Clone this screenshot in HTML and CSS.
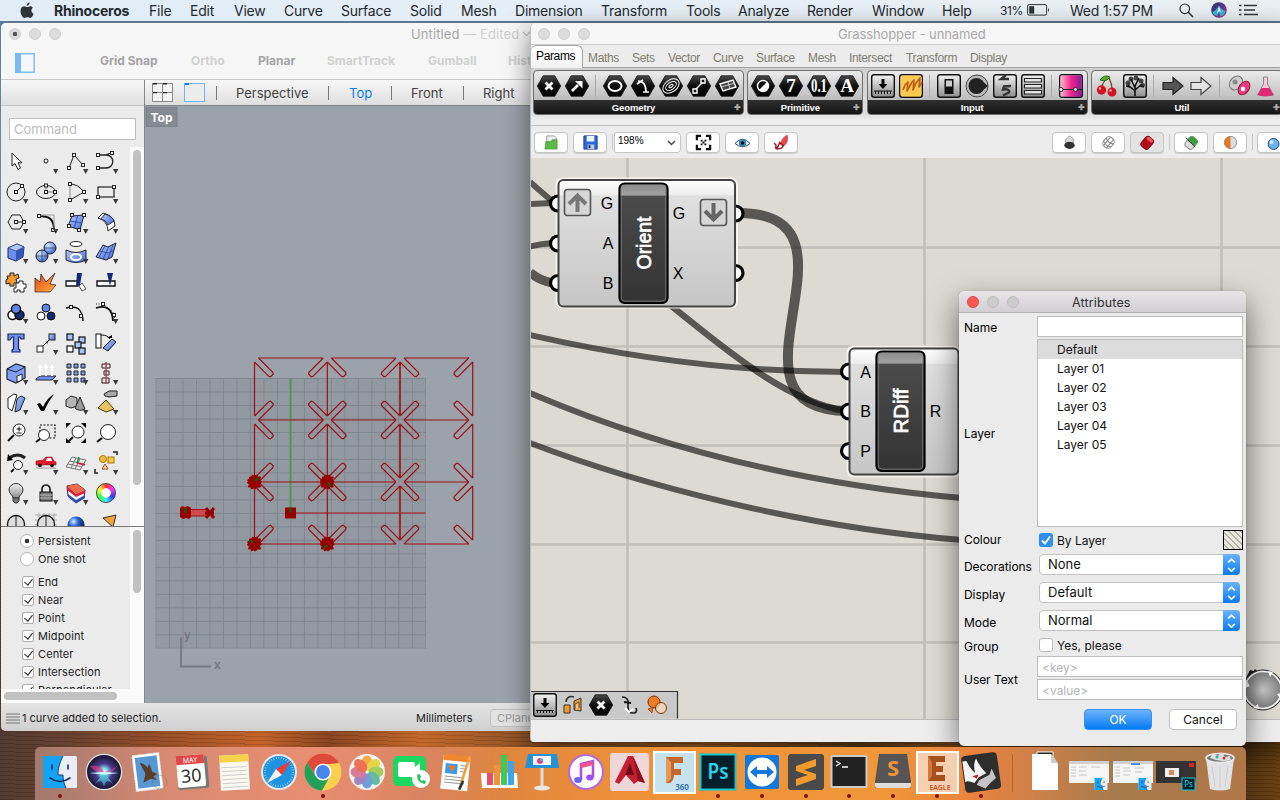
FILE: index.html
```html
<!DOCTYPE html>
<html lang="en">
<head>
<meta charset="utf-8">
<title>Rhinoceros</title>
<link rel="stylesheet" href="styles.css">
</head>
<body>
<svg class="defs" width="0" height="0">
  <defs>
    <path id="v" d="M7 7h5.4l-2.7 5z" fill="#3a3a3a"/>
    <rect id="k" x="-1.5" y="-1.5" width="3" height="3" fill="#fff" stroke="#222"/>
    <linearGradient id="blu" x1="0" y1="0" x2="1" y2="1"><stop offset="0" stop-color="#b9ccfb"/><stop offset="1" stop-color="#4468d8"/></linearGradient>
    <radialGradient id="ball" cx=".35" cy=".3" r=".8"><stop offset="0" stop-color="#dce8ff"/><stop offset=".5" stop-color="#7ba0ea"/><stop offset="1" stop-color="#2b50b8"/></radialGradient>
    <radialGradient id="dball" cx=".35" cy=".3" r=".7"><stop offset="0" stop-color="#d8ecff"/><stop offset=".4" stop-color="#2b66d8"/><stop offset="1" stop-color="#04123c"/></radialGradient>
    <linearGradient id="hexg" x1="0" y1="0" x2="0" y2="1"><stop offset="0" stop-color="#4a4a4a"/><stop offset=".45" stop-color="#111"/><stop offset="1" stop-color="#000"/></linearGradient>
    <linearGradient id="sil" x1="0" y1="0" x2="0" y2="1"><stop offset="0" stop-color="#f2f2f2"/><stop offset="1" stop-color="#8d8d8d"/></linearGradient>
    <linearGradient id="fire" x1="0" y1="0" x2="1" y2="1"><stop offset="0" stop-color="#e8431a"/><stop offset="1" stop-color="#ffb03a"/></linearGradient>
    <path id="hex" d="M-5.8-10.2H5.8L11.7 0L5.8 10.2H-5.8L-11.7 0z" fill="url(#hexg)" stroke="#111" stroke-width=".8"/>
    <rect id="box" x="-11.3" y="-11.3" width="22.6" height="22.6" rx="2.5" fill="url(#sil)" stroke="#111" stroke-width="1.4"/>
    <g id="finder"><rect x="-17" y="-16" width="34" height="32" rx="1.5" fill="#e9eef5"/><path d="M-17-16H3C-1-8-2-3-2 3H3C3 8 4 12 6 16H-17z" fill="#15a4f4"/><path d="M-8-7v4M8-7v4M-10 6Q0 13 10 6" stroke="#16305a" stroke-width="1.6" fill="none" stroke-linecap="round"/><path d="M3-16C-1-8-2-3-2 3H3C3 8 4 12 6 16" fill="none" stroke="#16305a" stroke-width=".9"/></g>
  </defs>
</svg>

<header class="menubar">
  <span><svg width="14" height="17" viewBox="0 0 14 17"><path d="M9.600.5c.1 1.700-1.400 3.300-3 3.300C6.400 2.200 7.900.7 9.600.5zM12.900 5.800c-2.300 1.600-1.800 4.900.700 5.900-.6 1.900-1.900 4.200-3.300 4.200-1.200 0-1.500-.7-2.900-.7s-1.900.7-2.900.7C2.500 15.900.5 12.100.5 9.100.5 6 2.300 4.300 4.300 4.300c1.200 0 2.200.8 2.900.8s1.800-.9 3.200-.9c1 0 1.900.6 2.500 1.600z" fill="#2e3439"/></svg></span>
  <b>Rhinoceros</b><span>File</span><span>Edit</span><span>View</span><span>Curve</span><span>Surface</span><span>Solid</span><span>Mesh</span><span>Dimension</span><span>Transform</span><span>Tools</span><span>Analyze</span><span>Render</span><span>Window</span><span>Help</span>
  <span class="pct">31%</span>
  <span><svg width="24" height="12" viewBox="0 0 24 12"><rect x=".6" y=".6" width="19" height="10.500" rx="1.500" fill="none" stroke="#2e3439"/><rect x="2.200" y="2.200" width="5" height="7.400" fill="#2e3439"/><path d="M21 4q2 2 0 4z" fill="#2e3439"/></svg></span>
  <span>Wed 1:57 PM</span>
  <span><svg width="15" height="15" viewBox="0 0 15 15"><circle cx="5.800" cy="5.800" r="4.800" fill="none" stroke="#2e3439" stroke-width="1.200"/><path d="M9.300 9.300L14 14" stroke="#2e3439" stroke-width="1.600"/></svg></span>
  <span><svg width="16" height="16" viewBox="0 0 16 16"><defs><linearGradient id="sg" x1="0" y1="0" x2="1" y2="1"><stop offset="0" stop-color="#28304e"/><stop offset=".4" stop-color="#4b3a8c"/><stop offset="1" stop-color="#c0307e"/></linearGradient></defs><circle cx="8" cy="8" r="7.800" fill="url(#sg)"/><path d="M1.500 10C4 9 6 7 8 4c2 3 4 4 6.500 5-1 4-3 5-5 5.500L8 10l-2 4C3.500 13.500 2 12 1.500 10z" fill="#37b6dc"/><path d="M8 4l2 6-2-1-2 3z" fill="#fff"/></svg></span>
  <span><svg width="19" height="12" viewBox="0 0 19 12"><path d="M5 1.500h13M5 6h11M5 10.500h14M0 1.500h2.500M0 6h2.500M0 10.500h2.500" stroke="#2e3439" stroke-width="1.700"/></svg></span>
</header>

<section class="win rhino">
  <div class="rtitle"><i class="dot on"></i><i class="dot"></i><i class="dot"></i><span class="doc">Untitled <em>— Edited</em></span><svg width="9" height="6" viewBox="0 0 9 6"><path d="M1 1l3.500 3.500L8 1" fill="none" stroke="#bbb" stroke-width="1.200"/></svg></div>
  <div class="rtools"><svg width="20" height="20" viewBox="0 0 20 20"><rect x=".8" y=".8" width="18.400" height="18.400" fill="#f4f8fc" stroke="#7ab8f8" stroke-width="1.400"/><rect width="6" height="20" fill="#7ab8f8"/></svg><b class="en">Grid Snap</b><b>Ortho</b><b class="en">Planar</b><b>SmartTrack</b><b>Gumball</b><b>Hist</b></div>
  <div class="rbody">
    <aside class="side">
      <div class="sidehead"></div>
      <div class="cmdwrap"><div class="cmd">Command</div></div>
      <div class="toolsarea">
        <div class="tools">
          <svg viewBox="-15 -15 30 30"><path d="M-4-9V4L-1 1.500L2 7.500L4.500 6L2 .8H6z" fill="#fff" stroke="#222"/></svg>
          <svg viewBox="-15 -15 30 30"><circle cy="-1" r="2" fill="#fff" stroke="#222"/><use href="#v"/></svg>
          <svg viewBox="-15 -15 30 30"><path d="M-7 6L-2-7L7 3" fill="none" stroke="#222"/><use href="#k" x="-7" y="6"/><use href="#k" x="-2" y="-7"/><use href="#k" x="7" y="3"/><use href="#v"/></svg>
          <svg viewBox="-15 -15 30 30"><path d="M-8-7H0C9-7 9 6 0 6H-8M-1-7L5-9" fill="none" stroke="#222" stroke-width="1.300"/><use href="#k" x="-8" y="-7"/><use href="#k" x="-8" y="6"/><use href="#k" x="6" y="-9"/><use href="#v"/></svg>

          <svg viewBox="-15 -15 30 30"><circle r="9" fill="none" stroke="#222"/><path d="M0 0L6-6" stroke="#222"/><use href="#k"/><use href="#k" x="6" y="-6"/><use href="#v"/></svg>
          <svg viewBox="-15 -15 30 30"><ellipse rx="9.500" ry="6.500" fill="none" stroke="#222"/><path d="M0-6V0H9" stroke="#777" fill="none"/><use href="#k"/><use href="#k" y="-6.500"/><use href="#k" x="9"/><use href="#v"/></svg>
          <svg viewBox="-15 -15 30 30"><path d="M-6-8Q2-8 8 0L-6 8" fill="none" stroke="#222"/><path d="M-6-8V8" stroke="#888"/><use href="#k" x="-6" y="-8"/><use href="#k" x="-6" y="8"/><use href="#k" x="8"/><use href="#v"/></svg>
          <svg viewBox="-15 -15 30 30"><rect x="-8" y="-5" width="16" height="10" fill="none" stroke="#222" stroke-width="1.200"/><use href="#k" x="-8" y="5"/><use href="#k" x="8" y="-5"/><use href="#v"/></svg>

          <svg viewBox="-15 -15 30 30"><path d="M-4-7H4L8 0L4 7H-4L-8 0z" fill="none" stroke="#222"/><path d="M0 0H8" stroke="#222"/><use href="#k"/><use href="#k" x="8"/><use href="#v"/></svg>
          <svg viewBox="-15 -15 30 30"><path d="M-8-6C4-6 8-3 8 9" fill="none" stroke="#111" stroke-width="2"/><path d="M-6-7H8V6" stroke="#999" fill="none"/><use href="#k" x="-7" y="-6"/><use href="#k" x="7" y="8"/><use href="#v"/></svg>
          <svg viewBox="-15 -15 30 30"><path d="M-4-6L8-7L4 8L-8 4z" fill="url(#blu)" stroke="#222"/><path d="M2-7L-2 6M-6-1L6 1" stroke="#2b50b8"/><use href="#k" x="-4" y="-7"/><use href="#k" x="8" y="-7"/><use href="#k" x="-7" y="4"/><use href="#k" x="3" y="8"/><use href="#v"/></svg>
          <svg viewBox="-15 -15 30 30"><path d="M-8-4L-3-9Q9-6 9 4L2 9Q2-1-8-4z" fill="#fff" stroke="#222"/><path d="M-5-3L-1-8Q7-5 8-1L2 3Q0-2-5-3z" fill="url(#blu)" stroke="#234"/><use href="#v"/></svg>

          <svg viewBox="-15 -15 30 30"><path d="M-8-4L1-8L8-5L7 5L0 9L-8 6z" fill="#6d90ee" stroke="#1a2a66"/><path d="M-8-4L0-1L8-5L1-8z" fill="#b5c8fb" stroke="#1a2a66" stroke-width=".6"/><path d="M0-1V9L7 5L8-5z" fill="#3456b8"/><use href="#v"/></svg>
          <svg viewBox="-15 -15 30 30"><circle cx="4" cy="-4" r="6" fill="url(#ball)" stroke="#223"/><circle cx="-4" cy="4" r="6" fill="url(#ball)" stroke="#223"/><path d="M-10 4H2M-4-2V10M-2-4H10" stroke="#234" stroke-width=".7"/><use href="#v"/></svg>
          <svg viewBox="-15 -15 30 30"><ellipse cy="-8" rx="6" ry="2.500" fill="#fff" stroke="#222"/><path d="M-10-2Q0 3 10-2V8Q0 13-10 8z" fill="url(#blu)" stroke="#223"/><ellipse cy="5" rx="5" ry="3" fill="none" stroke="#fff" stroke-width="2"/><use href="#v"/></svg>
          <svg viewBox="-15 -15 30 30"><path d="M-3-7L2-5L10-9L6 5L0 8L-10 5z" fill="url(#blu)" stroke="#223"/><path d="M-6-1L2 1L8-2M3-6L-3 7M-1-6L-7 5M7-7L2 7" stroke="#2b4aa0" fill="none" stroke-width=".8"/><use href="#v"/></svg>

          <svg viewBox="-15 -15 30 30"><path d="M-9-6h3v-3h4v3l4-2 1 4-3 1 1 4h-3v3h-4v-3l-4 1v-4l2-1z" fill="#f29a2e" stroke="#222"/><path d="M0 1h3v-2h4v3h3v4h-2v4h-4v-2h-3v2h-3v-4h2z" fill="#fff" stroke="#222"/></svg>
          <svg viewBox="-15 -15 30 30"><path d="M-11 10V-4L-6 0L-5-8L0 0L9-9L4 2L10 3L4 10z" fill="url(#fire)" stroke="#222" stroke-width=".7"/></svg>
          <svg viewBox="-15 -15 30 30"><path d="M-10-1H2V4H-10z" fill="#fff" stroke="#111" stroke-width="1.300"/><path d="M1-9H6L4 3L0 4z" fill="#102a78"/><path d="M3 4L6 1L10 7L6 9z" fill="#fff" stroke="#555"/></svg>
          <svg viewBox="-15 -15 30 30"><path d="M-9-1H9V4H-9z" fill="#fff" stroke="#111" stroke-width="1.400"/><path d="M1-9H7L4 4z" fill="#102a78"/></svg>

          <svg viewBox="-15 -15 30 30"><g stroke="#111" stroke-width="1.500"><circle cx="-3.500" cy="3" r="4.500" fill="#fff"/><circle cx="3.500" cy="3" r="4.500" fill="#102a78"/><circle cy="-3" r="4.500" fill="#5f86ee"/></g><use href="#v"/></svg>
          <svg viewBox="-15 -15 30 30"><g stroke="#111"><circle cx="-5" cy="4" r="4" fill="#fff"/><circle cx="5" cy="4" r="4" fill="#102a78"/><circle cy="-4" r="4" fill="#5f86ee"/></g></svg>
          <svg viewBox="-15 -15 30 30"><path d="M-10-4Q6-9 7 9" fill="none" stroke="#111" stroke-width="1.500"/><use href="#k" x="-5" y="-5"/><use href="#k" x="5" y="4"/></svg>
          <svg viewBox="-15 -15 30 30"><path d="M-10-4Q6-9 7 9" fill="none" stroke="#111" stroke-width="1.800"/><path d="M-10-8H-3L7 0L9 8" fill="none" stroke="#333" stroke-dasharray="1 1.500"/><use href="#k" x="-3" y="-8"/><use href="#k" x="8" y="3"/><use href="#v"/></svg>

          <svg viewBox="-15 -15 30 30"><path d="M-8-9H8V-4H5L4-6H2.500V6L4 7V9H-4V7L-2.500 6V-6H-4L-6-3H-8z" fill="#7292ee" stroke="#14265c" stroke-width="1.200"/></svg>
          <svg viewBox="-15 -15 30 30"><path d="M-5 5L4-4" stroke="#222"/><path d="M0-1L3-3L1 1z"/><rect x="-9" y="3" width="6" height="6" fill="#fff" stroke="#222"/><rect x="3" y="-9" width="6" height="6" fill="url(#blu)" stroke="#222"/><use href="#v"/></svg>
          <svg viewBox="-15 -15 30 30"><g fill="#a9c0fa" stroke="#111" stroke-width="1.200"><rect x="-9" y="-9" width="6" height="6"/><rect x="3" y="-6" width="6" height="6"/><rect x="-1" y="-1" width="6" height="6"/><rect x="3" y="5" width="6" height="6"/><rect x="-9" y="3" width="6" height="6" fill="#fff"/></g></svg>
          <svg viewBox="-15 -15 30 30"><rect x="-10" y="-9" width="5" height="14" fill="#fff" stroke="#111"/><path d="M-3 5L6-4L10-1L2 8z" fill="url(#blu)" stroke="#111"/><path d="M-5-8Q2-8 4-4" fill="none" stroke="#111"/><path d="M1-5h5v-3z"/></svg>

          <svg viewBox="-15 -15 30 30"><path d="M-9-4L0-9L9-6V5L0 10L-9 6z" fill="#7fa0f4" stroke="#223" stroke-width="1.200"/><path d="M-9-4L0-1L9-6" fill="none" stroke="#223"/><path d="M1 3L6 1V7L1 9z" fill="#fff" stroke="#223"/><use href="#v"/></svg>
          <svg viewBox="-15 -15 30 30"><path d="M-10 6L-6 3H10L6 7H-10z" fill="#6f92f0" stroke="#223"/><path d="M-6 3V-6M0 3V-6M6 3V-6" stroke="#fff" stroke-width="1.600"/><path d="M-8.500-5l2.500-4 2.500 4zM-2.500-5L0-9l2.500 4zM3.500-5L6-9l2.500 4z" fill="#fff"/><use href="#v"/></svg>
          <svg viewBox="-15 -15 30 30"><g fill="#7d9bef" stroke="#222"><path d="M-9-9h4v4h-4zM-2-9h4v4h-4zM5-9h4v4H5zM-9-2h4v4h-4zM-2-2h4v4h-4zM5-2h4v4H5zM-9 5h4v4h-4zM-2 5h4v4h-4zM5 5h4v4H5z"/></g><use href="#v"/></svg>
          <svg viewBox="-15 -15 30 30"><g fill="#e6e6e6" stroke="#222"><path d="M-4-9H4v4H-4zM-2-2H3v4H-2zM-4 5H3v5H-4z"/></g><path d="M0-11V11" stroke="#d8203a" stroke-width="1.300"/><use href="#v"/></svg>

          <svg viewBox="-15 -15 30 30"><path d="M-8-5L-2-9L1-8L-4 8L-8 5z" fill="#fff" stroke="#222"/><path d="M1-4L5-7L9-5L4 7L-1 9z" fill="url(#blu)" stroke="#222"/><use href="#v"/></svg>
          <svg viewBox="-15 -15 30 30"><path d="M-9 1L-6 0L-3 4Q1-5 8-9Q2-1-2 8L-5 8z"/><use href="#v"/></svg>
          <svg viewBox="-15 -15 30 30"><path d="M-10-3L-5-7L1-5V3L-5 5L-10 3z" fill="#b5b5b5" stroke="#222"/><path d="M4-6L9 6Q3 9-1 5z" fill="#999" stroke="#222"/><use href="#v"/></svg>
          <svg viewBox="-15 -15 30 30"><path d="M-8 5L0-3L8 6L0 9z" fill="#e8c25e" stroke="#4a3a10"/><path d="M-2-9L3-12L11-12V-7L3-6L-1-7z" fill="#aaa" stroke="#222"/><use href="#v"/></svg>

          <svg viewBox="-15 -15 30 30"><circle cx="3" cy="-3" r="6" fill="#fff" stroke="#222"/><path d="M-2 2L-8 8" stroke="#111" stroke-width="2"/><path d="M.500-4h5M3-6.500v5M.500 0h5" stroke="#111"/></svg>
          <svg viewBox="-15 -15 30 30"><rect x="-6" y="-8" width="15" height="13" fill="none" stroke="#111" stroke-dasharray="2 1.500" stroke-width="1.200"/><circle cx="-2" cy="2" r="5.500" fill="#fff" stroke="#222"/><path d="M-6 6L-10 9" stroke="#111" stroke-width="2"/></svg>
          <svg viewBox="-15 -15 30 30"><path d="M-10-10h5l-5 5zM10-10v5l-5-5zM10 10h-5l5-5zM-10 10v-5l5 5z"/><circle cx="2" cy="-1" r="6" fill="#fff" stroke="#222"/><path d="M-3 4L-8 9" stroke="#111" stroke-width="2"/></svg>
          <svg viewBox="-15 -15 30 30"><circle cx="2" cy="-1" r="7.500" fill="#fff" stroke="#222"/><path d="M-4 5L-9 9" stroke="#111" stroke-width="2.200"/></svg>

          <svg viewBox="-15 -15 30 30"><path d="M-7-5Q2-11 9-5" fill="none" stroke="#222" stroke-width="3"/><path d="M-9-2l1-7 5 6z"/><circle cx="2" cy="2" r="4.500" fill="#fff" stroke="#222"/><path d="M-2 6L-5 9" stroke="#111" stroke-width="2"/><use href="#v"/></svg>
          <svg viewBox="-15 -15 30 30"><path d="M-10-2L-3-3L0-6H6L8-2L10-1V2H-10z" fill="#e0182c" stroke="#8c0d18" stroke-width=".5"/><path d="M1-5h4l1 3H0z" fill="#fff"/><circle cx="-6" cy="2.500" r="1.800"/><circle cx="6" cy="2.500" r="1.800"/><path d="M-10 5H10" stroke="#999"/><use href="#v"/></svg>
          <svg viewBox="-15 -15 30 30"><path d="M-4-6L10-3L4 7L-10 4zM0-5L-5 5M4-4L-1 6M-6-2L9 1M-8 1L6 4" fill="none" stroke="#777"/><path d="M1 0L3-6" stroke="#0b9a3c" stroke-width="1.500"/><path d="M1 0L9 2" stroke="#d8203a" stroke-width="1.500"/><use href="#v"/></svg>
          <svg viewBox="-15 -15 30 30"><circle cx="-3" cy="-4" r="3.500" fill="#f6b83c" stroke="#a87410"/><rect x="2" y="-6" width="6" height="6" fill="#f6c83c" stroke="#a87410"/><path d="M-1 1L2 6H-4z" fill="#ffd9b0" stroke="#a05010"/><path d="M7-11h4v3M-11 6v4h3" fill="none" stroke="#222" stroke-width="1.500"/><use href="#v"/></svg>

          <svg viewBox="-15 -15 30 30"><path d="M-3 5C-3 2-7 1-7-3a7 6.500 0 0 1 14 0C7 1 3 2 3 5z" fill="url(#sil)" stroke="#333"/><path d="M-3 5h6v3l-2 2h-2l-2-2z" fill="#777" stroke="#333"/><use href="#v"/></svg>
          <svg viewBox="-15 -15 30 30"><path d="M-4 0V-4a4 4 0 0 1 8 0V0" fill="none" stroke="#222" stroke-width="1.700"/><rect x="-6" y="-1" width="12" height="9" fill="#777" stroke="#111"/><path d="M-6 2H6M-6 5H6" stroke="#bbb"/><use href="#v"/></svg>
          <svg viewBox="-15 -15 30 30"><path d="M-9-7L1-9L9-3L8 5L0 10L-8 3z" fill="#fff" stroke="#223"/><path d="M-9-7L1-9L9-3L0 1z" fill="#f06a4a"/><path d="M-9-7L0 1V4L-9-3zM0 1L9-3V0L0 4z" fill="#d8203a"/><path d="M-8 1L0 7L9 2V5L0 10L-8 4z" fill="#2b50b8"/><use href="#v"/></svg>
          <div class="wheel"></div>

          <svg viewBox="-15 -15 30 30"><circle cy="1" r="8.500" fill="#ddd" stroke="#111" stroke-width="1.300"/><path d="M0-7V10M-8 5H8" stroke="#222"/></svg>
          <svg viewBox="-15 -15 30 30"><path d="M-11-8H11M-11-3H11M-11 2H11M-7-10V9M-2-10V9M3-10V9M8-10V9" stroke="#aaa"/><circle cy="1" r="8.500" fill="#ddd" stroke="#111" stroke-width="1.300"/><path d="M0-7V10M-8 5H8" stroke="#222"/></svg>
          <svg viewBox="-15 -15 30 30"><circle cy="2" r="8.500" fill="url(#dball)"/></svg>
          <svg viewBox="-15 -15 30 30"><path d="M-3-5L10-8L7 4z" fill="#f2a23a" stroke="#333"/></svg>
        </div>
        <div class="vtrack"><i class="t1"></i></div>
      </div>
      <div class="snaps">
        <div class="snaplist">
          <p><i class="radio sel"></i>Persistent</p><p><i class="radio"></i>One shot</p>
          <p class="gap"><i class="cb"></i>End</p><p><i class="cb"></i>Near</p><p><i class="cb"></i>Point</p><p><i class="cb"></i>Midpoint</p><p><i class="cb"></i>Center</p><p><i class="cb"></i>Intersection</p><p><i class="cb"></i>Perpendicular</p>
        </div>
        <div class="vtrack"><i class="t2"></i></div>
      </div>
      <div class="htrack"><i></i></div>
    </aside>
    <main class="view">
      <div class="viewtabs">
        <svg width="21" height="19" viewBox="0 0 21 19"><rect x=".5" y=".5" width="20" height="18" fill="#f4f4f4" stroke="#888"/><path d="M10.500 0v19M0 9.500h21" stroke="#888"/><path d="M1 .700h4M11 .700h4M1 9.600h4M11 9.600h4" stroke="#222" stroke-width="1.400"/></svg>
        <svg width="21" height="19" viewBox="0 0 21 19"><rect x=".5" y=".5" width="20" height="18" fill="#ececec" stroke="#72b3f5"/><path d="M1 1h4" stroke="#0a7cf0" stroke-width="2"/></svg>
        <i></i><span>Perspective</span><i></i><span class="cur">Top</span><i></i><span>Front</span><i></i><span>Right</span>
      </div>
      <svg class="vp" width="386" height="597" viewBox="145 106 386 597">
        <defs>
          <pattern id="g" x="155.500" y="378" width="13.490" height="13.490" patternUnits="userSpaceOnUse"><path d="M0 .5H13.500M.5 0V13.500" stroke="#80868f" stroke-width="1"/></pattern>
          <path id="arm" d="M4 0L18.300 14.300L18.800 16L16 18.800L14.300 18.300L0 4"/>
          <g id="dn"><use href="#arm"/></g><g id="dl"><use href="#arm" transform="scale(-1 1)"/></g>
          <g id="ur"><use href="#arm" transform="scale(1 -1)"/></g><g id="ul"><use href="#arm" transform="scale(-1 -1)"/></g>
          <g id="x4"><use href="#dn"/><use href="#dl"/><use href="#ur"/><use href="#ul"/></g>
          <path id="blob" d="M-2-7L0-6L2-7L3-5L6-5L5-2L7 0L5 2L6 5L3 5L1 7L-1 6L-3 7L-3 5L-6 5L-5 2L-7 1L-6-1L-7-2L-5-3L-5-5L-3-5z" fill="#960000" stroke="#960000"/>
        </defs>
        <rect x="145" y="106" width="386" height="597" fill="#9ca2aa"/>
        <rect x="155.500" y="378" width="270" height="270" fill="#9299a1"/>
        <rect x="155.500" y="378" width="270.500" height="270.500" fill="url(#g)"/>
        <path d="M290.500 378V508" stroke="#4c9a52" stroke-width="2"/>
        <path d="M296 513H425.500" stroke="#a3383f" stroke-width="1.500"/>
        <g fill="none" stroke="#9c0f14" stroke-width="1.200">
          <path d="M258.500 358H323M331.500 358H396M404.500 358H469M258.500 420H323M331.500 420H396M404.500 420H469M258.500 482H323M331.500 482H396M404.500 482H469M258.500 544H323M331.500 544H396M404.500 544H469"/>
          <path d="M254.500 362V416M254.500 424V478M254.500 486V540M327.300 362V416M327.300 424V478M327.300 486V540M472.700 362V416M472.700 424V478M472.700 486V540"/>
          <path d="M400 362V416M400 424V478M400 486V540" stroke="#a3282e" stroke-width="2"/>
          <use href="#dn" x="254.500" y="358"/><use href="#dn" x="327.300" y="358"/><use href="#dl" x="327.300" y="358"/><use href="#dn" x="400" y="358"/><use href="#dl" x="400" y="358"/><use href="#dl" x="472.700" y="358"/>
          <use href="#dn" x="254.500" y="420"/><use href="#ur" x="254.500" y="420"/><use href="#x4" x="327.300" y="420"/><use href="#x4" x="400" y="420"/><use href="#dl" x="472.700" y="420"/><use href="#ul" x="472.700" y="420"/>
          <use href="#dn" x="254.500" y="482"/><use href="#ur" x="254.500" y="482"/><use href="#x4" x="327.300" y="482"/><use href="#x4" x="400" y="482"/><use href="#dl" x="472.700" y="482"/><use href="#ul" x="472.700" y="482"/>
          <use href="#ur" x="254.500" y="544"/><use href="#ur" x="327.300" y="544"/><use href="#ul" x="327.300" y="544"/><use href="#ur" x="400" y="544"/><use href="#ul" x="400" y="544"/><use href="#ul" x="472.700" y="544"/>
        </g>
        <use href="#blob" x="254.500" y="482"/><use href="#blob" x="327.300" y="482"/><use href="#blob" x="254.500" y="544"/><use href="#blob" x="327.300" y="544"/>
        <path d="M255 481l3-3M328 483l2.500 3M253 543l-3-3M327 545l-3 3" stroke="#0a640a" stroke-width="2"/>
        <rect x="285" y="507.500" width="11" height="11" fill="#960000"/><path d="M290.500 507.500v5" stroke="#0a640a" stroke-width="2"/>
        <rect x="190" y="509.500" width="18" height="6.500" fill="#cf4a50" stroke="#a01010"/>
        <path d="M180 508l2-2 3 1 3-1 3 2v9l-2 2-3-1-3 1-3-2z" fill="#960000"/><path d="M185.500 508v5" stroke="#0a640a" stroke-width="2"/>
        <path d="M206 508l8 10M214 508l-8 10M205 513h9" stroke="#960000" stroke-width="3"/>
        <path d="M181 637.500V666.500H211" fill="none" stroke="#74797f" stroke-width="1.800"/>
        <text x="184" y="639" class="ax">y</text><text x="214" y="669" class="ax">x</text>
        <rect x="146" y="107.500" width="31" height="19" fill="#868b92" stroke="#7b8087"/><text x="150.500" y="122" class="vplab">Top</text>
      </svg>
    </main>
  </div>
  <footer class="rstat"><svg width="14" height="11" viewBox="0 0 14 11"><path d="M0 1h14M0 4h14M0 7h14M0 10h14" stroke="#777"/></svg><span class="msg">1 curve added to selection.</span><span class="unit">Millimeters</span><span class="cpl">CPlane</span></footer>
</section>

<section class="win gh">
  <div class="gtitle"><i class="dot"></i><i class="dot"></i><i class="dot"></i><span>Grasshopper - unnamed</span></div>
  <nav class="gtabs"><b>Params</b><span>Maths</span><span>Sets</span><span>Vector</span><span>Curve</span><span>Surface</span><span>Mesh</span><span>Intersect</span><span>Transform</span><span>Display</span></nav>
  <div class="ribbon">
    <div class="panel p1"><svg width="211" height="30" viewBox="533 70 211 30">
      <use href="#hex" x="549" y="86"/><path d="M545.500 82.500l7 7M552.500 82.500l-7 7" stroke="#fff" stroke-width="2.800"/>
      <use href="#hex" x="577" y="86"/><path d="M572 91l6-6" stroke="#fff" stroke-width="2.600"/><path d="M575 81h7.500v7.500z" fill="#fff"/>
      <path d="M595.500 75V97" stroke="#aaa"/>
      <use href="#hex" x="615" y="86"/><ellipse cx="615" cy="86" rx="6.500" ry="5" fill="none" stroke="#fff" stroke-width="2"/>
      <use href="#hex" x="643" y="86"/><path d="M638 81q8 0 8 11M637 84l6-4M643 92h6" stroke="#fff" stroke-width="1.700" fill="none"/>
      <use href="#hex" x="671" y="86"/><g transform="rotate(-35 671 86)" fill="none" stroke="#fff"><ellipse cx="671" cy="86" rx="9" ry="6"/><ellipse cx="671" cy="86" rx="6" ry="3.500"/><ellipse cx="671" cy="86" rx="2.500" ry="1.200"/></g>
      <use href="#hex" x="699" y="86"/><path d="M695 90l8-8" stroke="#fff" stroke-width="1.500"/><path d="M693 89h4v4h-4zM701 79h4v4h-4z" fill="#111" stroke="#fff" stroke-width="1.400"/>
      <use href="#hex" x="727" y="86"/><path d="M720 84l13-4 3 7-13 4z" fill="#444" stroke="#fff" stroke-width="1.400"/><path d="M728 82l2 7M721 87l14-4" stroke="#ccc"/>
    </svg><h5>Geometry<em>✚</em></h5></div>
    <div class="panel p2"><svg width="116" height="30" viewBox="747 70 116 30">
      <use href="#hex" x="763" y="86"/><circle cx="763" cy="86" r="5.500" fill="#111" stroke="#fff" stroke-width="1.400"/><path d="M767 82a5.500 5.500 0 0 1-8 8z" fill="#fff"/>
      <use href="#hex" x="791" y="86"/><text x="791" y="92" class="ht" font-size="19">7</text>
      <use href="#hex" x="819" y="86"/><text x="819" y="92" class="ht" font-size="18" textLength="16" lengthAdjust="spacingAndGlyphs">0.1</text>
      <use href="#hex" x="847" y="86"/><text x="847" y="92" class="ht" font-size="19">A</text>
    </svg><h5>Primitive<em>✚</em></h5></div>
    <div class="panel p3"><svg width="221" height="30" viewBox="867 70 221 30">
      <use href="#box" x="883" y="86"/><path d="M881.500 79h3v5h3l-4.500 5-4.500-5h3z"/><path d="M874 91H892M875.500 91v3M878.500 91v3M881.500 91v3M884.500 91v3M887.500 91v3M890.500 91v3" stroke="#111"/>
      <use href="#box" x="911" y="86"/><rect x="900.500" y="75.500" width="21" height="21" rx="2" fill="#ffc94e"/><path d="M903 90l2-5 3-3-1 9 5-9 2-2-1 10 3-7 4-5-1 9 3-5" fill="none" stroke="#b8621a" stroke-width="1.700" stroke-linejoin="round"/>
      <path d="M929.500 75V97M1051.500 75V97" stroke="#aaa"/>
      <use href="#box" x="949" y="86"/><rect x="944.500" y="79" width="9" height="15" fill="#111"/><rect x="946" y="80.500" width="6" height="6" fill="#ccc"/>
      <circle cx="977" cy="86" r="11" fill="#bbb" stroke="#444"/><circle cx="976.500" cy="86" r="8" fill="#222"/><path d="M981 80l7 6-7 6z" fill="#222"/>
      <use href="#box" x="1005" y="86"/><path d="M1006 75l-5 4h8M1011 86l-7 .500-1 3q7-1 6 3l-6 3" fill="none" stroke="#333" stroke-width="2.400"/>
      <use href="#box" x="1033" y="86"/><path d="M1024.500 78.500h17v3.500h-17zM1024.500 84.500h17v3.500h-17zM1024.500 90.500h17v3.500h-17z" fill="#e4e4e4" stroke="#222" stroke-width="1.200"/>
      <defs><linearGradient id="pk"><stop offset="0" stop-color="#f7b8cf"/><stop offset=".5" stop-color="#f2258a"/><stop offset="1" stop-color="#8a1a9a"/></linearGradient></defs>
      <use href="#box" x="1071" y="86"/><rect x="1060.500" y="75.500" width="21" height="21" fill="url(#pk)"/><path d="M1060 89.500h22" stroke="#222"/><circle cx="1061" cy="89.500" r="2" fill="#fff" stroke="#222"/><circle cx="1075.500" cy="89.500" r="2" fill="#fff" stroke="#222"/>
    </svg><h5>Input<em>✚</em></h5></div>
    <div class="panel p4"><svg width="192" height="30" viewBox="1091 70 192 30">
      <path d="M1101 89Q1103 80 1109 78Q1112 84 1112 89" fill="none" stroke="#6a4a20" stroke-width="1.300"/><path d="M1100 80q4-6 10-3-3 5-10 3z" fill="#58a828" stroke="#2f6a12"/><circle cx="1101.500" cy="90" r="4.700" fill="#d01424"/><circle cx="1112" cy="92" r="4.500" fill="#d01424"/><circle cx="1100" cy="88.500" r="1.200" fill="#ffb0b0"/><circle cx="1110.500" cy="90.500" r="1.200" fill="#ffb0b0"/>
      <use href="#box" x="1135" y="86"/><path d="M1135 96V85M1135 91l-7-6M1135 90l7-6M1135 88l-4-9M1135 86l4-8M1130 87l-4-1M1140 86l4 1" stroke="#111" stroke-width="1.600"/><g fill="#111" opacity=".75"><circle cx="1128" cy="83" r="2.500"/><circle cx="1131" cy="79" r="2.500"/><circle cx="1136" cy="78" r="2.500"/><circle cx="1141" cy="81" r="2.500"/><circle cx="1143" cy="85" r="2"/></g>
      <path d="M1153.500 75V97M1219.500 75V97" stroke="#aaa"/>
      <path d="M1163 82.500h10v-5l10 8.500-10 8.500v-5h-10z" fill="#555" stroke="#222" stroke-width="1.200"/>
      <path d="M1191 82.500h10v-5l10 8.500-10 8.500v-5h-10z" fill="#e4e4e4" stroke="#444" stroke-width="1.200"/>
      <ellipse cx="1236" cy="83" rx="6" ry="7.500" transform="rotate(40 1236 83)" fill="#ccc" stroke="#777"/><circle cx="1235" cy="82" r="2.500" fill="#888"/><ellipse cx="1244" cy="88" rx="5" ry="7.500" transform="rotate(35 1244 88)" fill="#e93a86" stroke="#912"/><circle cx="1243" cy="89" r="2.200" fill="#fff"/>
      <path d="M1263.500 77h4v7l6 11q-8 2-16 0l6-11z" fill="#f3c8d8" stroke="#888"/><path d="M1261.500 88h8l4 7q-8 2.500-16 0z" fill="#e02a72"/>
    </svg><h5>Util<em>✚</em></h5></div>
  </div>
  <div class="gbar">
    <span class="btn"><svg viewBox="-9 -9 18 18"><path d="M-5-7H3L5-5V5H-5z" fill="#eee" stroke="#999"/><path d="M-7 7L-6-1H-1L1-3H6V7z" fill="#5cb84a" stroke="#3a8a2c" stroke-width=".6"/></svg></span>
    <span class="btn"><svg viewBox="-9 -9 18 18"><path d="M-7-7H7V7H-7z" fill="#2a6ad8" stroke="#1a3a90"/><path d="M-4-7H4V-1H-4z" fill="#eef4ff"/><path d="M-3 2H4V7H-3z" fill="#bcd"/><path d="M-2 3H0V6H-2z" fill="#124"/></svg></span>
    <i class="sep"></i>
    <span class="combo">198%<svg width="9" height="6" viewBox="0 0 9 6"><path d="M1 1l3.500 3.500L8 1" fill="none" stroke="#444" stroke-width="1.400"/></svg></span>
    <span class="btn"><svg viewBox="-9 -9 18 18"><path d="M-7-2.500V-7H-2.500M2.500-7H7V-2.500M7 2.500V7H2.500M-2.500 7H-7V2.500" fill="none" stroke="#111" stroke-width="2.400"/><path d="M-3-3h2v2h2v-2h2v2h-2v2h2v2h-2v-2h-2v2h-2v-2h2v-2h-2z" fill="#111"/></svg></span>
    <span class="btn"><svg viewBox="-9 -9 18 18"><path d="M-8 1Q0-8 8 1Q0 8-8 1z" fill="#e8f4fa" stroke="#333"/><circle cy=".5" r="4" fill="#2b8cc4"/><circle cy=".5" r="1.800"/></svg></span>
    <span class="btn"><svg viewBox="-9 -9 18 18"><path d="M-1 2Q0-5 6-8Q8 0 2 4z" fill="#e84a4a" stroke="#a22" stroke-width=".5"/><path d="M-8 1Q-5 2-6 5T0 6L2 3L-2 0Q-3 4-5 6" fill="none" stroke="#a01820" stroke-width="1.500"/></svg></span>
    <b class="grow"></b>
    <span class="btn"><svg viewBox="-9 -9 18 18"><path d="M-4-3L0-7L4-4V1H-4z" fill="#ddd" stroke="#999"/><ellipse cy="3" rx="5.500" ry="3.800" fill="#333"/></svg></span>
    <span class="btn"><svg viewBox="-9 -9 18 18"><g fill="none" stroke="#888" stroke-width="1.100" transform="rotate(40)"><rect x="-5" y="-6" width="10" height="12" rx="4"/><path d="M-5-2q5 3 10 0M-5 2q5 3 10 0M-2-6V6M2-6V6"/></g></svg></span>
    <span class="btn down"><svg viewBox="-9 -9 18 18"><g transform="rotate(40)"><rect x="-5" y="-6" width="10" height="13" rx="3.500" fill="#b80d1c" stroke="#700"/><ellipse cy="-4" rx="4" ry="2" fill="#e85a60"/></g></svg></span>
    <i class="sep"></i>
    <span class="btn"><svg viewBox="-9 -9 18 18"><g transform="rotate(40)"><rect x="-5" y="-6" width="10" height="13" rx="3.500" fill="#ddd" stroke="#888"/><path d="M-5-2Q-5-6 0-6T5-2V1H-5z" fill="#3aa03a"/></g><path d="M-6-5L4 5" stroke="#333"/></svg></span>
    <span class="btn"><svg viewBox="-9 -9 18 18"><circle r="6.500" fill="#ddd" stroke="#888"/><path d="M0-6.500A6.500 6.500 0 0 0 0 6.500z" fill="#e07a28"/></svg></span>
    <i class="sep"></i>
    <span class="btn"><svg viewBox="-9 -9 18 18"><circle cx="-1" cy="1.500" r="5.800" fill="#6ab4ee" stroke="#246"/><circle cx="-3" cy="-.5" r="2" fill="#d8f0ff"/></svg></span>
  </div>
  <svg class="canvas" width="750" height="561" viewBox="530 158 750 561">
    <defs>
      <linearGradient id="cmp" x1="0" y1="0" x2="0" y2="1"><stop offset="0" stop-color="#fff"/><stop offset=".12" stop-color="#ededed"/><stop offset=".125" stop-color="#dfdfdf"/><stop offset="1" stop-color="#c6c6c6"/></linearGradient>
      <linearGradient id="drk" x1="0" y1="0" x2="0" y2="1"><stop offset="0" stop-color="#8c8c8c"/><stop offset=".1" stop-color="#a2a2a2"/><stop offset=".101" stop-color="#4b4b4b"/><stop offset="1" stop-color="#333"/></linearGradient>
      <radialGradient id="cps"><stop offset="0" stop-color="#ccc"/><stop offset="1" stop-color="#777"/></radialGradient>
    </defs>
    <rect x="530" y="158" width="750" height="561" fill="#dcdad3"/>
    <path d="M627.500 158V719M924.500 158V719M1221.500 158V719M530 247.500H1280M530 346.500H1280M530 445.500H1280M530 544.500H1280M530 642.500H1280" stroke="#c1bfba" stroke-width="2.600"/>
    <g fill="none" stroke="#000" stroke-opacity=".6">
      <path d="M530 182L553 202" stroke-width="6"/><path d="M530 204L553 203" stroke-width="6"/><path d="M530 246.500Q540 244 553 243" stroke-width="6"/><path d="M530 272.500Q540 281 553 283" stroke-width="9"/>
      <path d="M738 213C880 213 706 411 848 411" stroke-width="10"/><path d="M660 297C715 340 780 400 846 411" stroke-width="6.500"/>
      <path d="M530 335C640 360 740 372 845 372" stroke-width="6"/><path d="M530 393C640 440 780 482 962 498" stroke-width="6"/><path d="M530 443C640 485 800 527 962 540" stroke-width="6"/>
    </g>
    <g fill="none" stroke="#f4f3f0" stroke-width="2"><rect x="556.500" y="178.500" width="180.500" height="129" rx="6"/><rect x="847.500" y="346.500" width="113" height="130" rx="6"/></g>
    <g fill="#fff" stroke="#000" stroke-width="3.200"><circle cx="558" cy="203.500" r="7.500"/><circle cx="558" cy="243.500" r="7.500"/><circle cx="558" cy="283" r="7.500"/><circle cx="735.500" cy="213.500" r="7.500"/><circle cx="735.500" cy="273" r="7.500"/><circle cx="849" cy="371.500" r="7.500"/><circle cx="849" cy="411.500" r="7.500"/><circle cx="849" cy="451" r="7.500"/></g>
    <g fill="url(#cmp)" stroke="#444" stroke-width="2"><rect x="558.500" y="180" width="176.500" height="126.500" rx="5"/><rect x="849.500" y="348.500" width="109" height="126" rx="5"/></g>
    <g fill="url(#drk)" stroke="#000" stroke-width="2.200"><rect x="619.500" y="183.500" width="48" height="119.500" rx="5"/><rect x="876.500" y="351.500" width="48" height="119.500" rx="5"/></g>
    <g fill="none" stroke="#888" stroke-width=".8"><rect x="621.200" y="185.200" width="44.600" height="116" rx="4"/><rect x="878.200" y="353.200" width="44.600" height="116" rx="4"/></g>
    <g fill="#d6d6d6" stroke="#555" stroke-width="1.600"><rect x="564.500" y="189.500" width="26" height="26" rx="3"/><rect x="700.500" y="199.500" width="26" height="26" rx="3"/></g>
    <path d="M577.500 212V196M569 204l8.500-8.500L586 204" fill="none" stroke="#777" stroke-width="4"/><path d="M713.500 203V219M705 211l8.500 8.500L722 211" fill="none" stroke="#666" stroke-width="4"/>
    <g class="port"><text x="607" y="209">G</text><text x="608" y="249">A</text><text x="608" y="289">B</text><text x="679" y="219">G</text><text x="678" y="279">X</text><text x="865.500" y="378">A</text><text x="865.500" y="417">B</text><text x="865.500" y="457">P</text><text x="935.500" y="417">R</text></g>
    <text class="cname" transform="translate(650.500 243) rotate(-90)" textLength="53" lengthAdjust="spacingAndGlyphs">Orient</text>
    <text class="cname" transform="translate(907.500 411) rotate(-90)" textLength="45" lengthAdjust="spacingAndGlyphs">RDiff</text>
    <path d="M1246 678l4-8 6 2 3 4zM1250 676l5-7 6 5z" fill="#111"/>
    <circle cx="1263" cy="690" r="20" fill="url(#cps)" stroke="#333"/><circle cx="1263" cy="690" r="18.500" fill="none" stroke="#fff" stroke-width="1.500"/>
    <path d="M1268 671l5 1-3 5zM1281 700l-4-6 4-1zM1253 708l5-4 1 5zM1246 680l4 6-5 2z" fill="#fff"/>
    <rect x="531" y="691" width="147" height="27.500" fill="#c9c9c9"/><path d="M531 691.500H677.500V718.500" fill="none" stroke="#333" stroke-width="1.200"/>
    <use href="#box" x="545" y="705"/><path d="M543.500 698h3v5h3l-4.500 5-4.500-5h3z"/><path d="M536 710.500H554M537.500 710v3M540.500 710v3M543.500 710v3M546.500 710v3M549.500 710v3M552.500 710v3" stroke="#111"/>
    <path d="M564 705h6v8h-6zM574 701l7-3v13l-7-1z" fill="#f49a28" stroke="#333"/><path d="M566 702q1-7 8-5" fill="none" stroke="#333" stroke-width="1.600"/><path d="M575 711V704l4-2v6" fill="#f8c070" stroke="#333" stroke-width=".8"/>
    <use href="#hex" x="601" y="705"/><path d="M597.500 701.500l7 7M604.500 701.500l-7 7" stroke="#fff" stroke-width="2.800"/>
    <path d="M622 697q5 0 6 4v6q0 6 5 6t3-5" fill="none" stroke="#222" stroke-width="1.700"/><path d="M625 708l4 4 4-3" fill="none" stroke="#fff" stroke-width="2"/><path d="M624 702l7 1" stroke="#111" stroke-width="1.800"/>
    <circle cx="654" cy="702" r="6" fill="#f07c28" stroke="#7a3608"/><circle cx="661" cy="708" r="5.500" fill="#f8d8b8" fill-opacity=".7" stroke="#7a3608"/><path d="M648 709l5-2-1 6z" fill="#f07c28" stroke="#7a3608" stroke-width=".7"/>
  </svg>
  <div class="gstat"></div>
</section>

<section class="win attr">
  <div class="atitle"><i class="dot red"></i><i class="dot"></i><i class="dot"></i><span>Attributes</span></div>
  <div class="form">
    <label class="r1">Name</label><div class="inp r1"></div>
    <label class="r2">Layer</label><ul class="r2"><li class="hl">Default</li><li>Layer 01</li><li>Layer 02</li><li>Layer 03</li><li>Layer 04</li><li>Layer 05</li></ul>
    <label class="r3">Colour</label><div class="chk"><i class="on"><svg viewBox="0 0 14 14"><path d="M3 7.500L6 10.500L11 3.500" fill="none" stroke="#fff" stroke-width="1.900"/></svg></i>By Layer<b class="sw"></b></div>
    <label class="r4">Decorations</label><div class="pick">None<i><svg viewBox="0 0 16 21"><path d="M4.800 8L8 4.800L11.200 8M4.800 13L8 16.200L11.200 13" fill="none" stroke="#fff" stroke-width="1.500"/></svg></i></div>
    <label class="r4">Display</label><div class="pick">Default<i><svg viewBox="0 0 16 21"><path d="M4.800 8L8 4.800L11.200 8M4.800 13L8 16.200L11.200 13" fill="none" stroke="#fff" stroke-width="1.500"/></svg></i></div>
    <label class="r4">Mode</label><div class="pick">Normal<i><svg viewBox="0 0 16 21"><path d="M4.800 8L8 4.800L11.200 8M4.800 13L8 16.200L11.200 13" fill="none" stroke="#fff" stroke-width="1.500"/></svg></i></div>
    <label class="r5">Group</label><div class="chk c2"><i></i>Yes, please</div>
    <label class="r6">User Text</label><div class="kv"><div class="inp">&lt;key&gt;</div><div class="inp">&lt;value&gt;</div></div>
  </div>
  <div class="acts"><span class="ok">OK</span><span>Cancel</span></div>
</section>

<footer class="dock">
  <span class="run"><svg viewBox="-22 -22 44 44"><use href="#finder"/></svg></span>
  <span><svg viewBox="-22 -22 44 44"><defs><radialGradient id="si"><stop offset="0" stop-color="#fff"/><stop offset=".2" stop-color="#7fe4ea"/><stop offset=".5" stop-color="#4a3a8a"/><stop offset="1" stop-color="#15152c"/></radialGradient></defs><circle r="18.300" fill="#ddd"/><circle r="17" fill="url(#si)"/><path d="M-14-6Q-3-8 0 0Q9-2 14-7Q8 2 0 1Q-8 1-14-6z" fill="#e23b8c" opacity=".65"/><path d="M-9 12L0 0L9 12Q2 5 0 15Q-2 5-9 12z" fill="#48c8dc" opacity=".7"/><path d="M-15 1L0 0L15 1L0 2.500z" fill="#cfffff"/></svg></span>
  <span><svg viewBox="-22 -22 44 44"><g transform="rotate(-7)"><rect x="-14" y="-18" width="27" height="36" fill="#fff" stroke="#ddd" stroke-dasharray="2 1"/><rect x="-11.500" y="-15.500" width="22" height="31" fill="#5797d4"/><path d="M-7-10Q-2-9 0-4L2-8Q4-3 4 0L9 3L5 5L8 9L2 7L-6 10L-4 5Q-2 2-4-2z" fill="#5a3d22"/></g><circle cx="12" cy="10" r="7" fill="none" stroke="#776" opacity=".5"/></svg></span>
  <span><svg viewBox="-22 -22 44 44"><g transform="rotate(-5)"><rect x="-15" y="-15" width="31" height="32" rx="2" fill="#777"/><rect x="-15" y="-17" width="28" height="32" rx="2" fill="#fff"/><path d="M-15-17h28v9h-28z" fill="#e04848"/><text x="-1" y="-9.500" class="dt" font-size="7" fill="#fff">MAY</text><text x="-1" y="10" class="dt" font-size="18" fill="#333">30</text></g></svg></span>
  <span><svg viewBox="-22 -22 44 44"><g transform="rotate(-3)"><rect x="-15" y="-17" width="29" height="35" fill="#fbfaf2"/><path d="M-15-17h29v7h-29z" fill="#f5d24a"/><path d="M-13-5h25M-13-1h25M-13 3h25M-13 7h25M-13 11h25M-13 15h25" stroke="#ccc"/></g></svg></span>
  <span><svg viewBox="-22 -22 44 44"><circle r="18" fill="#e5e8ec"/><circle r="16" fill="#1f92e2"/><circle r="14" fill="none" stroke="#9dd" stroke-width="2" stroke-dasharray=".7 1.800"/><path d="M12-11L3 3L-3-3z" fill="#ef3b36"/><path d="M-12 11L3 3L-3-3z" fill="#f4f4f4"/></svg></span>
  <span class="run"><svg viewBox="-22 -22 44 44"><circle r="18.500" fill="#fcd04f"/><path d="M-16-9.300A18.500 18.500 0 0 1 16-9.300L7-8H0L-7 4z" fill="#df4a3c"/><path d="M-16-9.300A18.500 18.500 0 0 0-1 18.500L7 4H-7z" fill="#23a058"/><circle r="8.600" fill="#fff"/><circle r="6.900" fill="#4384ee"/></svg></span>
  <span><svg viewBox="-22 -22 44 44"><circle r="18" fill="#f5f5f3"/><g opacity=".88"><ellipse cy="-9" rx="5.500" ry="7.500" fill="#f6a02c"/><ellipse cy="-9" rx="5.500" ry="7.500" fill="#e3d030" transform="rotate(45)"/><ellipse cy="-9" rx="5.500" ry="7.500" fill="#9ac848" transform="rotate(90)"/><ellipse cy="-9" rx="5.500" ry="7.500" fill="#53b594" transform="rotate(135)"/><ellipse cy="-9" rx="5.500" ry="7.500" fill="#5d94d4" transform="rotate(180)"/><ellipse cy="-9" rx="5.500" ry="7.500" fill="#9a76b8" transform="rotate(225)"/><ellipse cy="-9" rx="5.500" ry="7.500" fill="#d66b90" transform="rotate(270)"/><ellipse cy="-9" rx="5.500" ry="7.500" fill="#ec6040" transform="rotate(315)"/></g></svg></span>
  <span><svg viewBox="-22 -22 44 44"><rect x="-18" y="-16" width="33" height="30" rx="5" fill="#1ed760"/><path d="M-13-8q0-2 2-2H2q2 0 2 2v3l5-4V6L4 2v1q0 2-2 2h-13q-2 0-2-2z" fill="#fff"/><circle cx="10" cy="7" r="9" fill="#fff"/><path d="M6 3q0 8 8 9l1-3-3-1-1 1q-2-1-2-3l1-1-1-3z" fill="#25c45a"/></svg></span>
  <span><svg viewBox="-22 -22 44 44"><g transform="rotate(6)"><rect x="-13" y="-16" width="27" height="34" fill="#fff"/><path d="M-13-17h27v6h-27z" fill="#ef8730"/><rect x="-10" y="-8" width="12" height="10" fill="#3a9be8"/><path d="M-8-6h8l-3 6z" fill="#f07a28"/><path d="M-10 5h20M-10 8h20M-10 11h20M5-7h6M5-4h6M5-1h6" stroke="#999"/><path d="M13-17L6 17" stroke="#f0a238" stroke-width="2.500"/><path d="M9 8L6 17" stroke="#234" stroke-width="2.500"/></g></svg></span>
  <span><svg viewBox="-22 -22 44 44"><path d="M-18 1h36l1 15h-36z" fill="#fff"/><path d="M-12 1h6v12h-6z" fill="#e8506a"/><path d="M-5-7H1v20h-6z" fill="#f2923a"/><path d="M2-17H8v30H2z" fill="#3cc95e"/><path d="M9-11h6v24H9z" fill="#40a4e8"/></svg></span>
  <span><svg viewBox="-22 -22 44 44"><path d="M-14-18H15l2 14H-17z" fill="#2791d8"/><path d="M-9-16h18v9h-18z" fill="#f5f8fa"/><circle cx="-2" cy="-11" r="3" fill="#e83e7c"/><path d="M-2-11v-3a3 3 0 0 1 3 3z" fill="#38b6e8"/><path d="M0-4V15" stroke="#ddd" stroke-width="3"/><ellipse cy="16" rx="8" ry="2.500" fill="#e8e8e8"/></svg></span>
  <span><svg viewBox="-22 -22 44 44"><circle r="18" fill="#b36ae0"/><circle r="16" fill="#fafafa"/><path d="M-5 8V-8L7-11V5" fill="none" stroke="#b04fe0" stroke-width="2.500"/><path d="M-5-6L7-9" stroke="#f0508c" stroke-width="4"/><ellipse cx="-8" cy="8" rx="3.800" ry="3" fill="#6a62ee"/><ellipse cx="4" cy="5.500" rx="3.800" ry="3" fill="#9a52ee"/></svg></span>
  <span><svg viewBox="-22 -22 44 44"><rect x="-20" y="-19" width="39" height="38" rx="3" fill="#efd6d8"/><path d="M-2-16L3-16L15 11L8 9L4 12L-4 3L-11 12L-15 10z" fill="#c41f30"/><path d="M0-9L4 3H-5z" fill="#6b0d18"/><path d="M3-16L15 11L8 9z" fill="#8c1220"/></svg></span>
  <span><svg viewBox="-22 -22 44 44"><rect x="-20" y="-20" width="41" height="41" fill="#c7e2ef" stroke="#fff" stroke-width="2"/><path d="M-8-15H9V-9H0V-3H7V3H0Q0 8-4 11H-8z" fill="#c4672c"/><path d="M-8-15l5 5v17l-5 4z" fill="#e59a58"/><text x="8" y="18" class="dt" font-size="8" font-weight="600" fill="#2c6aa8">360</text></svg></span>
  <span class="run"><svg viewBox="-22 -22 44 44"><rect x="-17.500" y="-17.500" width="35" height="35" fill="#04202a" stroke="#17c6d6" stroke-width="2"/><text y="7" class="dt" font-size="21" font-weight="600" textLength="21" lengthAdjust="spacingAndGlyphs" fill="#2cd0ea">Ps</text></svg></span>
  <span class="run"><svg viewBox="-22 -22 44 44"><rect x="-17" y="-17" width="34" height="34" rx="2" fill="#1278dc"/><circle r="14.500" fill="#fff"/><path d="M-12 0L-5-6V-2H5V-6L12 0L5 6V2H-5V6z" fill="#1278dc"/></svg></span>
  <span class="run"><svg viewBox="-22 -22 44 44"><rect x="-18" y="-18" width="36" height="36" rx="3" fill="#4a4a4a"/><path d="M-10-6L10-13V-6L-2-2L10 2V7L-10 14V7L2 3L-10-1z" fill="#f49a2c"/></svg></span>
  <span class="run"><svg viewBox="-22 -22 44 44"><rect x="-18.500" y="-17" width="37" height="33" rx="2" fill="#ccc"/><rect x="-16.500" y="-15" width="33" height="29" fill="#222"/><path d="M-13-11l4 2.500-4 2.500M-7-5h6" stroke="#fff" fill="none" stroke-width="1.300"/></svg></span>
  <span class="run"><svg viewBox="-22 -22 44 44"><path d="M-14-18H14L18 10V16H-18V10z" fill="#555"/><path d="M-18 11H18V14Q18 16 16 16H-16Q-18 16-18 14z" fill="#ddd"/><text y="4" class="dt" font-size="22" font-weight="700" fill="#f2913a">S</text></svg></span>
  <span class="run"><svg viewBox="-22 -22 44 44"><rect x="-20" y="-20" width="41" height="41" fill="#f5cfb2" stroke="#fff" stroke-width="2"/><path d="M-9-16H8V-10H-1V-6H6V0H-1V3H8V9H-9z" fill="#a8501c"/><path d="M-9-16l4 6v14l-4 5z" fill="#d27a3c"/><text x="3" y="18" class="dt" font-size="7.500" font-weight="600" textLength="21" lengthAdjust="spacingAndGlyphs" fill="#c8501c">EAGLE</text></svg></span>
  <span class="run"><svg viewBox="-22 -22 44 44"><g transform="rotate(-8)"><rect x="-18" y="-18" width="36" height="37" rx="4" fill="#2e2e2e"/><path d="M-17-13L-13-13Q-10-4-6 0Q-7-9-3-14Q-1-6 5 2L-3 5L-8 10Q-15 6-17 8z" fill="#f4f4f4"/><path d="M-3 8L8 4L11-2L14 8L8 12L2 17L-6 12z" fill="#c4c4c4"/><path d="M-9 3l6-1-2 4z" fill="#d01818"/></g></svg></span>
  <i class="dsep"></i>
  <span><svg viewBox="-22 -22 44 44"><path d="M-8-20H8V-10H-8z" fill="#222" stroke="#fff"/><path d="M-13-18H6L13-8V18H-13z" fill="#fff"/><path d="M6-18V-9H13z" fill="#ccc"/></svg></span>
  <span><svg viewBox="-22 -22 44 44"><rect x="-20" y="-11" width="40" height="22" fill="#f5f5f5"/><path d="M-20-11h40v3h-40z" fill="#d0d0d0"/><path d="M-18-5h5M-18-2h5M-18 1h5M-18 4h5M-10-5h8M-10-1h7M-10 3h8M2-5h9" stroke="#bbb" stroke-width=".8"/><use href="#finder" transform="translate(12 12) scale(.38)"/></svg></span>
  <span><svg viewBox="-22 -22 44 44"><rect x="-20" y="-11" width="40" height="22" fill="#f5f5f5"/><path d="M-20-11h40v3h-40z" fill="#d0d0d0"/><path d="M-2-9h9v2h-9z" fill="#4a8ee8"/><path d="M-18-5h5M-18-2h5M-18 1h5M-18 4h5M-10-4h7M-10-1h8M-10 3h7M2-4h9M2 0h7" stroke="#bbb" stroke-width=".8"/><use href="#finder" transform="translate(12 12) scale(.38)"/></svg></span>
  <span><svg viewBox="-22 -22 44 44"><rect x="-20" y="-11" width="40" height="22" fill="#333"/><rect x="-11" y="-4" width="14" height="9" fill="#eee"/><rect x="-7" y="-2" width="5" height="5" fill="#d88a58"/><path d="M13-9h5v4h-5z" fill="#d22"/><rect x="6" y="6" width="13" height="12" fill="#04202a" stroke="#17c6d6"/><text x="12.500" y="15" class="dt" font-size="8" fill="#2cd0ea">Ps</text></svg></span>
  <span><svg viewBox="-22 -22 44 44"><path d="M-14-14H14L10 17Q0 20-10 17z" fill="#e2e2e4"/><ellipse cy="-14" rx="14" ry="4.500" fill="#777" stroke="#eee" stroke-width="1.500"/><path d="M-10-14l3-5 5 3 4-4 3 5 5-1 1 4q-10 3-21-2z" fill="#ddd"/><circle cx="-3" cy="-15" r="1.500" fill="#2bb"/><circle cx="4" cy="-14" r="1.500" fill="#c33"/><path d="M-8-6L-5 15M0-5V16M8-6L5 15" stroke="#cdcdd0"/></svg></span>
</footer>
</body>
</html>
```
FILE: styles.css
```css
* { box-sizing: border-box; margin: 0; padding: 0; }
body {
  position: relative; width: 1280px; height: 800px; overflow: hidden;
  font-family: Inter, "Liberation Sans", sans-serif; font-size: 12px; color: #222;
  background:
    linear-gradient(#5e7d9b 0, #7891a8 300px, transparent 380px),
    repeating-linear-gradient(2deg, rgba(0,0,0,.14) 0 1px, transparent 1px 4px),
    linear-gradient(90deg, #533a32 0, #6a4230 70px, #9a4e28 160px, #c4642a 260px, #8a4522 330px, #c4692b 420px, #8a5026 540px, #9a5c28 700px, #5e3c1c 860px, #b0682a 1000px, #4e3212 1240px, #6a4214 1280px);
}
i, em { font-style: normal; }
svg { display: block; flex: none; }
.defs { position: absolute; }

.menubar {
  display: grid; height: 23px; padding: 0 0 1px 20px; align-items: center; white-space: nowrap;
  grid-template-columns: 34px 95px 41px 44px 50px 57px 69px 51px 54px 86px 85px 52px 69px 65px 70px 58px 27px 43px 109px 32px 28px 20px;
  font-size: 14px; letter-spacing: -.22px; color: #23292e;
  background: linear-gradient(90deg, #e0edf7, #e6eff6 60%, #eaeff3); border-bottom: 2px solid #5f768c;
}
.menubar b { font-weight: 700; }
.menubar .pct { font-size: 12px; letter-spacing: -.4px; }

.win { position: absolute; display: flex; flex-direction: column; overflow: hidden; }
.dot { width: 12px; height: 12px; border-radius: 50%; background: #dcdcdc; border: 1px solid #cfcfcf; margin-right: 8px; flex: none; }
.dot.on { background: radial-gradient(circle, #555 0 2px, #dcdcdc 2.600px); }
.dot.red { background: #fc5753; border-color: #df4744; }

/* modelling window */
.rhino { left: 1px; top: 23px; width: 560px; height: 708px; border-radius: 5px; background: #ebebeb; }
.rtitle { height: 22px; background: #f6f6f6; display: flex; align-items: center; padding-left: 8px; }
.rtitle .doc { margin-left: 342px; font-size: 13px; letter-spacing: .1px; color: #a6a6a6; width: 111px; white-space: nowrap; }
.rtitle em { color: #cfcfcf; }
.rtools { height: 35px; background: #f6f6f6; border-bottom: 1px solid #c9c9c9; display: grid; align-items: center; padding: 0 0 3px 14px; grid-template-columns: 85px 91px 67px 69px 101px 80px 60px; font-size: 12px; white-space: nowrap; }
.rtools b { color: #d0d0d0; font-weight: 700; letter-spacing: 0; margin-top: 0; }
.rtools svg { margin-top: 4px; }
.rtools b.en { color: #a4a4a4; }
.rbody { display: flex; height: 623px; flex: none; }
.side { width: 144px; border-right: 1px solid #85898e; display: flex; flex-direction: column; flex: none; }
.sidehead { height: 26px; border-bottom: 1px solid #c4c4c4; background: linear-gradient(#f7f7f7, #e0e0e0); }
.cmdwrap { padding: 12px 8px 10px 8px; }
.cmd { height: 22px; border: 1px solid #bdbdbd; background: #fff; color: #bcbcbc; font-size: 13px; line-height: 21px; padding-left: 4px; }
.toolsarea { height: 380px; margin-top: -3px; display: flex; border-bottom: 1px solid #777; overflow: hidden; flex: none; }
.tools { width: 129px; display: grid; grid-template-columns: repeat(4, 30px); grid-auto-rows: 30.1px; align-content: start; }
.tools > svg { width: 30px; height: 30px; }
.wheel { width: 20px; height: 20px; margin: 5px; border-radius: 50%; border: 1px solid #444; background: radial-gradient(circle, #fff 0 4.500px, transparent 5px), conic-gradient(#f33, #f3f, #33f, #3ff, #3f3, #ff3, #f33); }
.vtrack { flex: 1; background: #fafafa; padding: 3px 2px 0 3px; }
.vtrack i { display: block; width: 8px; border-radius: 4px; background: #c1c1c1; }
.vtrack .t1 { height: 335px; }
.vtrack .t2 { height: 63px; }
.snaps { height: 162px; display: flex; overflow: hidden; flex: none; }
.snaplist { width: 129px; padding: 5px 0 0 21px; font-size: 11px; color: #222; flex: none; }
.snaplist p { height: 18px; display: flex; align-items: center; letter-spacing: .1px; }
.snaplist .gap { margin-top: 5px; }
.radio { width: 14px; height: 14px; border-radius: 50%; background: #fff; border: 1px solid #b5b5b5; margin: 0 4px 0 -2px; }
.radio.sel { background: radial-gradient(circle, #333 0 2px, #fff 2.600px); }
.cb { width: 12px; height: 12px; border: 1px solid #adadad; border-radius: 2px; background: #fff; margin: 0 4px 0 0; }
.cb::after { content: ""; display: block; width: 4px; height: 7px; margin: 0 0 0 3px; border: solid #222; border-width: 0 1.700px 1.700px 0; transform: rotate(38deg); }
.htrack { height: 14px; background: #fafafa; padding: 3px 3px; }
.htrack i { display: block; width: 113px; height: 8px; border-radius: 4px; background: #c1c1c1; }
.view { width: 416px; }
.viewtabs { height: 26px; display: grid; align-items: center; padding-left: 7px; font-size: 13px; color: #3f3f3f; background: linear-gradient(#f7f7f7, #dedede); border-bottom: 1px solid #7f848a; grid-template-columns: 32px 32px 20px 92px 21px 42px 20px 52px 20px 60px; }
.viewtabs i { width: 1px; height: 14px; background: #777; }
.viewtabs .cur { color: #0a7cf5; }
.ax { font: 700 12px "Liberation Sans", sans-serif; fill: #74797f; }
.vplab { font: 700 12px Inter, sans-serif; fill: #fff; }
.rstat { height: 28px; display: flex; align-items: center; padding: 2px 0 0 5px; background: linear-gradient(#e4e4e4, #cfcfcf); font-size: 11px; color: #1d1d1d; flex: none; }
.rstat .msg { margin-left: 2px; width: 394px; }
.rstat .unit { width: 74px; }
.cpl { border: 1px solid #c0c0c0; border-radius: 4px; background: #e2e2e2; color: #999; padding: 1px 6px; width: 70px; }

/* node editor window */
.gh { left: 530px; top: 23px; width: 760px; height: 719px; background: #ececec; border-radius: 5px 5px 4px 4px; box-shadow: 0 8px 26px rgba(0,0,0,.5); border-left: 1px solid #bbb; }
.gtitle { height: 22px; background: #f6f6f6; display: flex; align-items: center; padding-left: 7px; border-bottom: 1px solid #cfcfcf; flex: none; }
.gtitle span { margin-left: 240px; font-size: 13px; letter-spacing: -.12px; color: #aaa; }
.gtabs { height: 23px; display: grid; align-items: center; grid-template-columns: 57px 44px 36px 45px 43px 52px 41px 57px 64px 60px; font: 12px "Liberation Sans", sans-serif; letter-spacing: -.35px; color: #7d7c70; border-bottom: 1px solid #a2a2a2; flex: none; }
.gtabs b { width: 52px; height: 23px; font-weight: 400; color: #000; background: linear-gradient(#fff, #f2f2f2); border: 1px solid #a2a2a2; border-bottom: 0; border-left: 0; border-radius: 6px 6px 0 0; padding: 3px 0 0 5px; }
.gtabs span { padding-top: 2px; }
.ribbon { height: 58px; padding: 2px 0 0 2px; display: flex; gap: 3.300px; background: linear-gradient(#cfcfcf, #dedede 45px, #eee 53px); border-bottom: 1px solid #c0c0c0; flex: none; }
.panel { height: 45px; border: 1px solid #6f6f6f; border-radius: 4px; background: linear-gradient(#eaeaea, #bdbdbd 28px); overflow: hidden; flex: none; }
.panel svg { margin: -1px -1px 0; }
.p1 { width: 211px; } .p2 { width: 116px; } .p3 { width: 221px; } .p4 { width: 192px; }
.panel h5 { height: 15px; background: linear-gradient(#303030, #121212); color: #fff; font: 700 9.500px/14px "Liberation Sans", sans-serif; letter-spacing: -.1px; display: flex; align-items: center; padding: 0 2px; }
.panel h5::before { content: ""; flex: 1 1 0; }
.panel h5 em { flex: 1 1 10px; text-align: right; font-size: 8px; color: #aaa; }
.ht { font-family: "Liberation Serif", serif; font-weight: 700; fill: #fff; text-anchor: middle; }
.gbar { height: 32px; padding: 0 0 0 3px; display: flex; align-items: center; gap: 5px; flex: none; width: 760px; }
.btn { width: 34px; height: 21px; background: #fff; border: 1px solid #c5c5c5; border-radius: 4px; display: flex; align-items: center; justify-content: center; flex: none; box-shadow: 0 1px 0 #d0d0d0; }
.btn svg { width: 17px; height: 17px; margin-top: 1px; }
.btn.down { background: #e3e3e3; }
.sep { width: 1px; height: 16px; background: #c8c8c8; margin: 0 -.5px; }
.grow { flex: 1; }
.combo { width: 67px; height: 21px; margin-left: -3px; background: #fff; border: 1px solid #c5c5c5; border-radius: 2px 4px 4px 2px; display: flex; justify-content: space-between; align-items: center; padding: 0 4px 3px 3px; font: 10px "Liberation Sans", sans-serif; color: #000; flex: none; }
.combo svg { margin-top: 4px; }
.canvas { margin-left: -1px; }
.port text { font: 16px "Liberation Sans", sans-serif; text-anchor: middle; fill: #000; }
.cname { font: 20.500px "Liberation Sans", sans-serif; text-anchor: middle; fill: #fff; stroke: #fff; stroke-width: .7px; }
.gstat { flex: 1; border-top: 1px solid #bbb; background: #ededed; }

/* attributes dialog */
.attr { left: 959px; top: 291px; width: 287px; height: 455px; background: #ebebeb; border-radius: 5px; box-shadow: 0 12px 30px rgba(0,0,0,.55), 0 0 1px rgba(0,0,0,.6); font-size: 12px; color: #111; }
.atitle { height: 22px; display: flex; align-items: center; padding-left: 8px; background: linear-gradient(#e7e5e7, #d1cfd1); border-bottom: 1px solid #b3b1b3; flex: none; }
.atitle .dot:not(.red) { background: #cdcccd; border-color: #bbb; }
.atitle span { margin: 2px 0 0 45px; font-size: 12.500px; letter-spacing: .15px; color: #333; }
.form { display: grid; grid-template-columns: 73px 206px; padding: 3px 0 0 5px; grid-template-rows: 23px 189px 26px 28px 28px 28px 18px 45px; }
.form label { align-self: start; padding-top: 4px; white-space: nowrap; color: #000; letter-spacing: -.05px; }
.inp { height: 21px; border: 1px solid #bdbdbd; background: #fff; color: #b5b5b5; padding: 2px 4px; line-height: 18px; }
.form label.r2 { align-self: center; padding-top: 0; }
.form ul { height: 188px; list-style: none; background: #fff; border: 1px solid #bdbdbd; }
.form li { height: 19px; line-height: 19px; padding-left: 19px; }
.form li.hl { background: #dcdcdc; }
.chk { display: flex; align-items: center; height: 20px; margin-top: 2px; }
.chk.c2 { margin-top: -3px; }
.chk i { width: 14px; height: 14px; margin: 0 4px 0 2px; border-radius: 3px; border: 1px solid #bbb; background: #fff; }
.chk i.on { background: #2d8ff0; border: 0; }
.sw { width: 20px; height: 20px; margin-left: auto; border: 1px solid #000; background: repeating-linear-gradient(45deg, #e9e8e2 0 2.700px, #b3b2a8 2.700px 4.200px); }
.form label.r4 { padding-top: 5px; }
.form label.r5 { padding-top: 1px; }
.form label.r6 { padding-top: 16px; }
.pick { width: 201px; height: 21px; margin-left: 2px; align-self: start; background: #fff; border: 1px solid #c2c2c2; border-radius: 4px; font-size: 13px; padding-left: 8px; display: flex; justify-content: space-between; line-height: 19px; }
.pick i { width: 17px; height: 21px; margin: -1px; border-radius: 0 4px 4px 0; background: linear-gradient(#6cb3fa, #067bf6); }
.kv { display: grid; gap: 2px; align-content: start; }
.acts { display: flex; gap: 17px; margin: 8px 0 0 125px; }
.acts span { width: 68px; height: 21px; line-height: 20px; text-align: center; background: #fff; border: 1px solid #c0c0c0; border-radius: 4px; }
.acts .ok { background: linear-gradient(#6cb3fa, #067bf6); color: #fff; border-color: #3a8ef0; }

/* dock */
.dock {
  position: absolute; left: 35px; top: 747px; width: 1211px; height: 53px; padding-left: 3px; border-radius: 5px 5px 0 0;
  display: flex; background: linear-gradient(90deg, #a27a6e 0, #b98071 60px, #d88a72 130px, #e88e72 280px, #d98460 390px, #e0853e 470px, #ef9138 600px, #f1973a 850px, #e8823e 940px, #c8804a 1010px, #a67a4c 1080px, #b07848 1211px);
}
.dock > span { width: 43.860px; height: 53px; display: flex; flex-direction: column; align-items: center; padding-top: 3px; flex: none; }
.dock svg { width: 44px; height: 44px; }
.run::after { content: ""; width: 4px; height: 4px; border-radius: 50%; background: #7a1408; }
.dsep { width: 1px; height: 38px; background: #b8622c; margin: 7px 10px 0 9px; }
.dt { font-family: "Noto Sans", sans-serif; text-anchor: middle; }
```
